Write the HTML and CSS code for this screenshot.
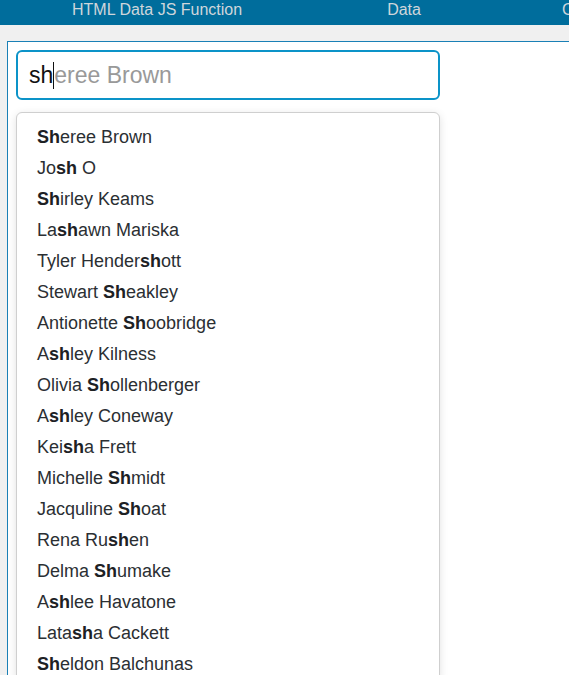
FILE: index.html
```html
<!DOCTYPE html>
<html>
<head>
<meta charset="utf-8">
<link rel="stylesheet" href="styles.css">
</head>
<body>
<div class="nav">
  <span class="nav-item first">HTML Data JS Function</span>
  <span class="nav-item second">Data</span>
  <span class="nav-item third">CSS</span>
</div>
<div class="panel">
  <div class="search">
    <span class="typed">sh</span><span class="caret"></span><span class="hint">eree Brown</span>
  </div>
  <ul class="menu">
    <li><b>Sh</b>eree Brown</li>
    <li>Jo<b>sh</b> O</li>
    <li><b>Sh</b>irley Keams</li>
    <li>La<b>sh</b>awn Mariska</li>
    <li>Tyler Hender<b>sh</b>ott</li>
    <li>Stewart <b>Sh</b>eakley</li>
    <li>Antionette <b>Sh</b>oobridge</li>
    <li>A<b>sh</b>ley Kilness</li>
    <li>Olivia <b>Sh</b>ollenberger</li>
    <li>A<b>sh</b>ley Coneway</li>
    <li>Kei<b>sh</b>a Frett</li>
    <li>Michelle <b>Sh</b>midt</li>
    <li>Jacquline <b>Sh</b>oat</li>
    <li>Rena Ru<b>sh</b>en</li>
    <li>Delma <b>Sh</b>umake</li>
    <li>A<b>sh</b>lee Havatone</li>
    <li>Lata<b>sh</b>a Cackett</li>
    <li><b>Sh</b>eldon Balchunas</li>
  </ul>
</div>
</body>
</html>
```

FILE: styles.css
```css
html, body {
  margin: 0;
  padding: 0;
  height: 100%;
  overflow: hidden;
}
body {
  background: #f0f0f0;
  font-family: "Liberation Sans", Arial, sans-serif;
}
.nav {
  height: 25px;
  background: #006d9c;
  display: flex;
  white-space: nowrap;
  overflow: hidden;
}
.nav-item {
  color: #cfd6db;
  font-size: 16px;
  line-height: 19px;
}
.nav-item.first { margin-left: 72px; }
.nav-item.second { margin-left: 145px; }
.nav-item.third { margin-left: 141px; }
.panel {
  margin: 16px 0 0 7px;
  background: #fff;
  border-top: 1px solid #1a80b6;
  border-left: 1px solid #1a80b6;
  padding: 8px 0 0 8px;
  height: 700px;
}
.search {
  box-sizing: border-box;
  width: 424px;
  height: 50px;
  border: 2px solid #0c93c8;
  border-radius: 6px;
  display: flex;
  align-items: center;
  padding-left: 11px;
  font-size: 23px;
}
.typed { color: #111; }
.hint { color: #999; }
.caret {
  width: 1px;
  height: 27px;
  background: #111;
}
.menu {
  list-style: none;
  margin: 12px 0 0 0;
  padding: 9px 0 0 20px;
  box-sizing: border-box;
  width: 424px;
  border: 1px solid #cfcfcf;
  border-radius: 6px;
  box-shadow: 0 2px 8px rgba(0,0,0,0.12);
  background: #fff;
}
.menu li {
  font-size: 18px;
  line-height: 31px;
  color: #2b2f33;
}
.menu b {
  font-weight: bold;
  color: #1d2124;
}
```
